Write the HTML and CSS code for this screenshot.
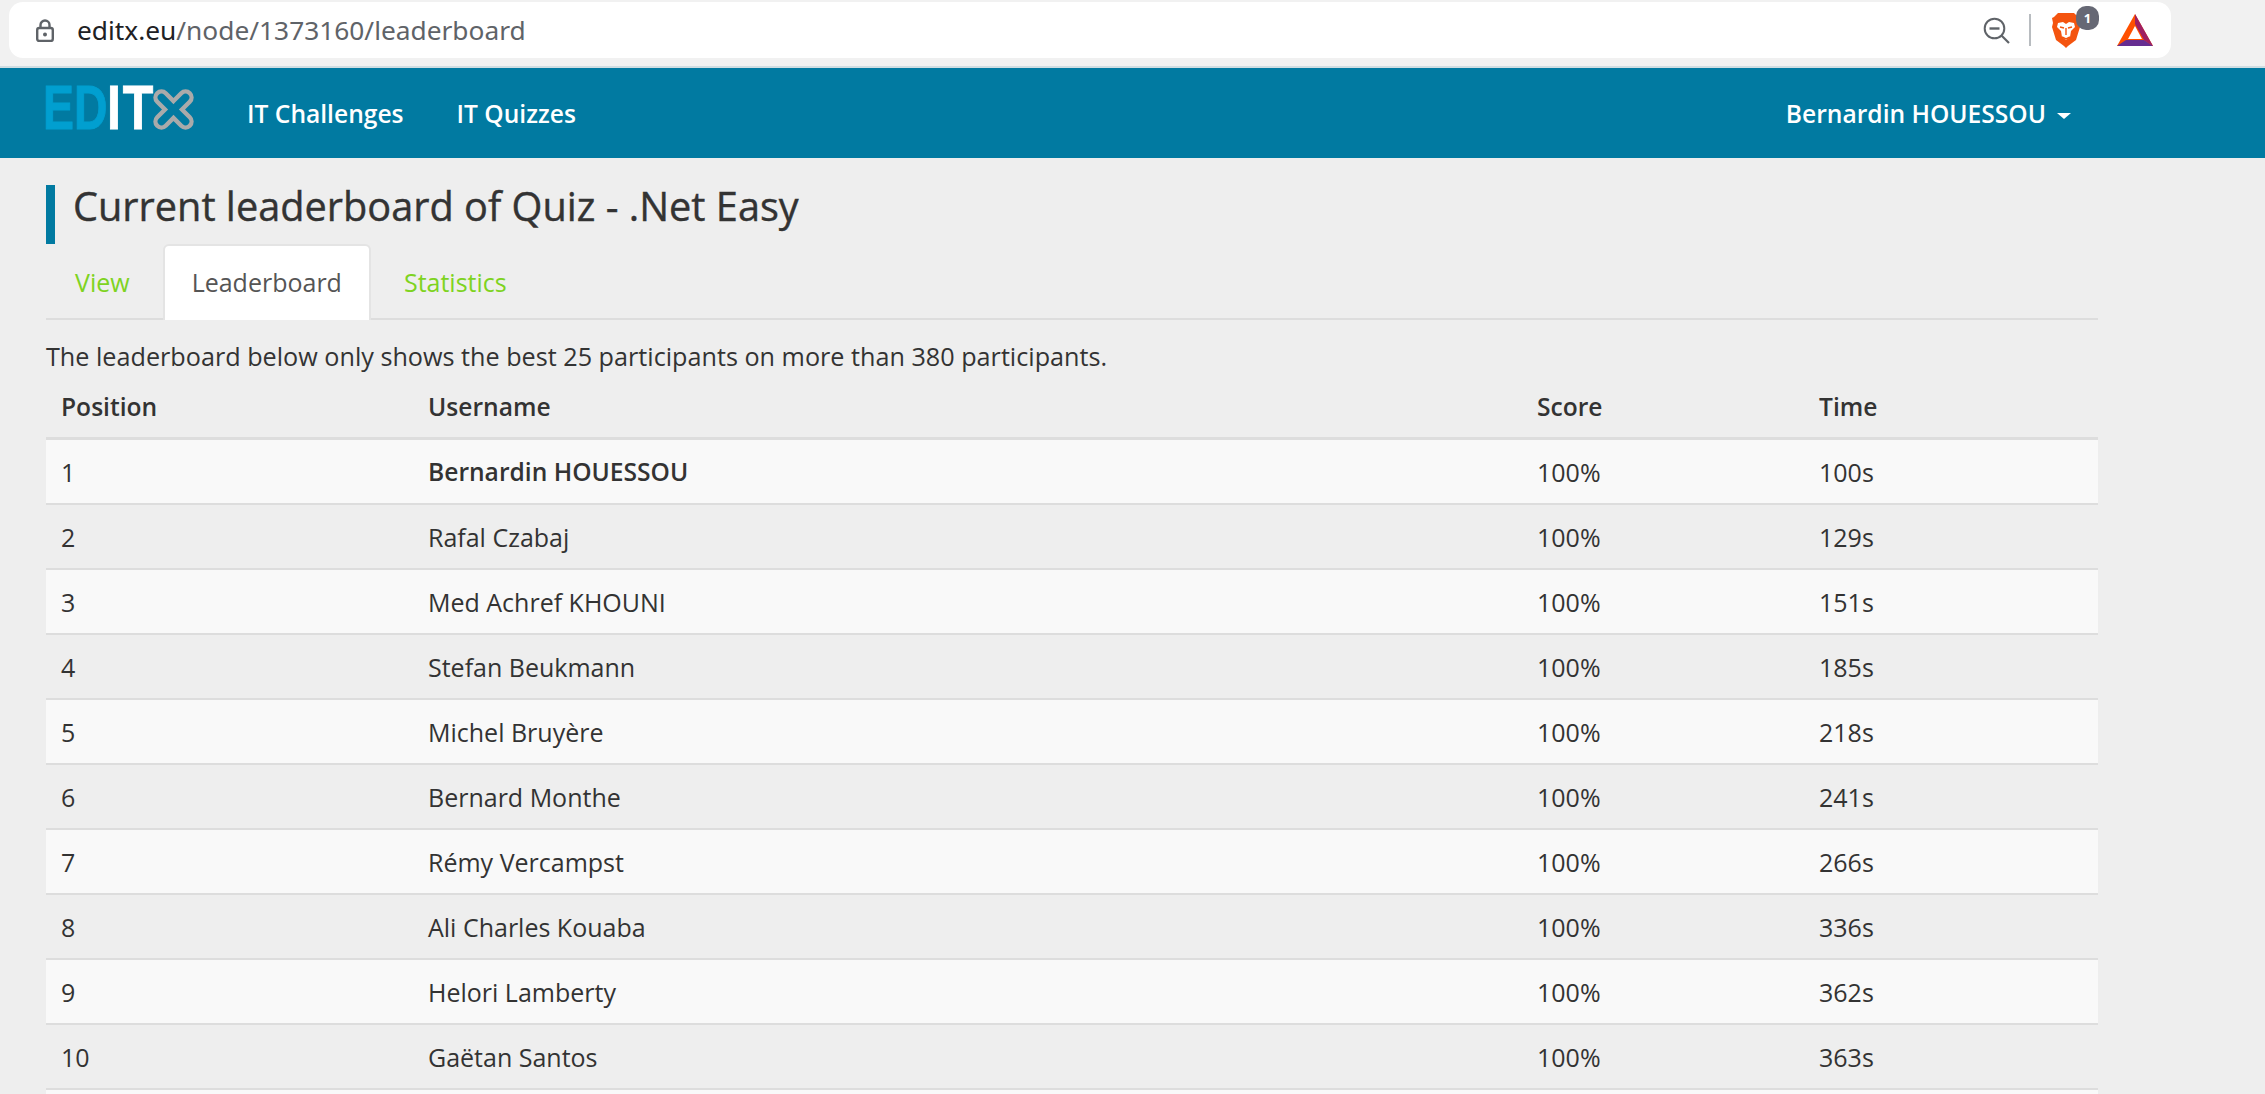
FILE: index.html
```html
<!DOCTYPE html>
<html>
<head>
	<meta charset="UTF-8">
	<title>Current leaderboard of Quiz - .Net Easy</title>
	<link rel="stylesheet" href="styles.css">
</head>

<body>
<div class="browser-bar">
	<div class="address">
		<svg class="lock" width="18" height="23" viewBox="0 0 18 23">
			<path d="M4.500 9V6a4.500 4.500 0 0 1 9 0v3" fill="none" stroke="#5f6368" stroke-width="2.400"/>
			<rect x="1.200" y="9" width="15.600" height="13" rx="2" fill="none" stroke="#5f6368" stroke-width="2.400"/>
			<circle cx="9" cy="15.500" r="2" fill="#5f6368"/>
		</svg>
		<span class="url"><span class="host">editx.eu</span>/node/1373160/leaderboard</span>
		<div class="address-icons">
			<svg class="zoom-out" width="27" height="27" viewBox="0 0 27 27">
				<circle cx="11.500" cy="11.500" r="9.800" fill="none" stroke="#5f6368" stroke-width="2"/>
				<path d="M6.500 11.500h10" stroke="#5f6368" stroke-width="2.400"/>
				<path d="M18.500 18.500l7.500 7.500" stroke="#5f6368" stroke-width="2.200"/>
			</svg>
			<div class="separator"></div>
			<div class="brave">
				<svg width="30" height="36" viewBox="0 0 30 36">
					<path d="M7 1h16l4 4 2 1-1 5 1 4-4 13-8 6-2 2-2-2-8-6L1 15l1-4-1-5 2-1z" fill="#f4540f"/>
					<path d="M7 11l5-1 3 2 3-2 5 1 1 4-4 4-1 6-4 3-4-3-1-6-4-4z" fill="#fff"/>
					<path d="M9 15l4 1M21 15l-4 1M15 16v7M11 25l4 2 4-2" fill="none" stroke="#f4540f" stroke-width="1.400"/>
				</svg>
				<span class="badge">1</span>
			</div>
			<svg class="bat" width="36" height="32" viewBox="0 0 36 32">
				<path d="M18 0L0 32h36z" fill="#ff5000"/>
				<path d="M18 0l18 32-9-6-9-16z" fill="#9e1f63"/>
				<path d="M0 32l9-6h18l9 6z" fill="#662d91"/>
				<path d="M18 12l7 13h-14z" fill="#fff"/>
			</svg>
		</div>
	</div>
</div>

<nav class="navbar">
	<svg class="logo" width="156" height="90" viewBox="-6 0 156 90">
		<text class="logo-ed" transform="translate(-3 61) scale(1.160 1.580)">ED</text>
		<text class="logo-it" transform="translate(61 61) scale(1.250 1.580)">IT</text>
		<path transform="translate(127.500 41.500) rotate(45)" d="M-6-6V-17a6 6 0 0 1 12 0V-6H17a6 6 0 0 1 0 12H6V17a6 6 0 0 1-12 0V6H-17a6 6 0 0 1 0-12z" fill="none" stroke="#aaaaaa" stroke-width="4.400"/>
	</svg>
	<a class="nav-link first">IT Challenges</a>
	<a class="nav-link">IT Quizzes</a>
	<a class="nav-link user">Bernardin HOUESSOU<span class="caret"></span></a>
</nav>

<div class="content">
	<h1 class="page-title">Current leaderboard of Quiz - .Net Easy</h1>
	<ul class="tabs">
		<li class="tab">View</li>
		<li class="tab active">Leaderboard</li>
		<li class="tab">Statistics</li>
	</ul>
	<p class="intro">The leaderboard below only shows the best 25 participants on more than 380 participants.</p>
	<table class="board">
		<colgroup>
			<col class="col-pos">
			<col class="col-name">
			<col class="col-score">
			<col class="col-time">
		</colgroup>
		<thead>
			<tr><th>Position</th><th>Username</th><th>Score</th><th>Time</th></tr>
		</thead>
		<tbody>
			<tr><td>1</td><td class="me">Bernardin HOUESSOU</td><td>100%</td><td>100s</td></tr>
			<tr><td>2</td><td>Rafal Czabaj</td><td>100%</td><td>129s</td></tr>
			<tr><td>3</td><td>Med Achref KHOUNI</td><td>100%</td><td>151s</td></tr>
			<tr><td>4</td><td>Stefan Beukmann</td><td>100%</td><td>185s</td></tr>
			<tr><td>5</td><td>Michel Bruyère</td><td>100%</td><td>218s</td></tr>
			<tr><td>6</td><td>Bernard Monthe</td><td>100%</td><td>241s</td></tr>
			<tr><td>7</td><td>Rémy Vercampst</td><td>100%</td><td>266s</td></tr>
			<tr><td>8</td><td>Ali Charles Kouaba</td><td>100%</td><td>336s</td></tr>
			<tr><td>9</td><td>Helori Lamberty</td><td>100%</td><td>362s</td></tr>
			<tr><td>10</td><td>Gaëtan Santos</td><td>100%</td><td>363s</td></tr>
			<tr class="last-row"><td></td><td></td><td></td><td></td></tr>
		</tbody>
	</table>
</div>
</body>
</html>
```

FILE: styles.css
```css
html, body {
	height: 100%;
	overflow: hidden;
}
body {
	margin: 0;
	background-color: #eeeeee;
	color: #333333;
	font-family: "Open Sans", "Noto Sans", sans-serif;
	font-size: 25px;
}

/* browser chrome */
.browser-bar {
	height: 66px;
	box-sizing: border-box;
	padding: 2px 94px 0 9px;
	background-color: #f1f1f1;
}
.address {
	display: flex;
	align-items: center;
	height: 56px;
	padding: 0 18px 0 27px;
	background-color: #fff;
	border-radius: 14px;
}
.url {
	margin-left: 23px;
	font-family: "Noto Sans", "Open Sans", sans-serif;
	font-size: 26.300px;
	color: #5f6368;
}
.host {
	color: #202124;
}
.address-icons {
	display: flex;
	align-items: center;
	margin-left: auto;
}
.separator {
	width: 2px;
	height: 32px;
	margin: 0 20px 0 19px;
	background-color: #b8bcc0;
}
.brave {
	position: relative;
	width: 30px;
	height: 36px;
	margin-right: 36px;
}
.badge {
	position: absolute;
	top: -6px;
	left: 25px;
	width: 23px;
	height: 24px;
	border-radius: 10px;
	background-color: #666874;
	color: #fff;
	font-size: 13px;
	font-weight: 700;
	line-height: 24px;
	text-align: center;
}

/* navbar */
.navbar {
	display: flex;
	align-items: center;
	height: 90px;
	padding-left: 40px;
	background-color: #017aa1;
	border-top: 2px solid #cfdde2;
}
.logo-ed, .logo-it {
	font-family: "Liberation Sans", sans-serif;
	font-size: 40px;
	font-weight: 700;
	stroke-width: 0.600px;
}
.logo-ed {
	fill: #019fd0;
	stroke: #019fd0;
}
.logo-it {
	fill: #fff;
	stroke: #fff;
	letter-spacing: 1.500px;
}
.nav-link {
	margin-left: 53px;
	color: #fff;
	font-size: 24.600px;
	font-weight: 600;
}
.nav-link.first {
	margin-left: 51px;
}
.nav-link.user {
	margin-left: auto;
	margin-right: 194px;
}
.caret {
	display: inline-block;
	margin-left: 11px;
	vertical-align: middle;
	border-top: 6px solid #fff;
	border-left: 7px solid transparent;
	border-right: 7px solid transparent;
}

/* page */
.content {
	width: 2052px;
	margin-left: 46px;
}
.page-title {
	margin: 27px 0 0;
	padding-left: 18px;
	height: 59px;
	border-left: 9px solid #017aa1;
	font-size: 39.700px;
	font-weight: 500;
	line-height: 42px;
	-webkit-text-stroke: 0.4px #333333;
}
.tabs {
	display: flex;
	height: 76px;
	box-sizing: border-box;
	margin: 0;
	padding: 0;
	list-style: none;
	border-bottom: 2px solid #dddddd;
}
.tab {
	height: 76px;
	box-sizing: border-box;
	margin-right: 4px;
	padding: 21px 29px 0;
	color: #7ed321;
	font-size: 25px;
}
.tab.active {
	padding: 19px 27px 0;
	border: 2px solid #e4e4e4;
	border-bottom: none;
	border-radius: 6px 6px 0 0;
	background-color: #fff;
	color: #555555;
}
.intro {
	margin: 19px 0 0;
	font-size: 25.200px;
	line-height: 34px;
}
.board {
	width: 100%;
	margin-top: 4px;
	table-layout: fixed;
	border-collapse: collapse;
}
.col-pos { width: 367px; }
.col-name { width: 1109px; }
.col-score { width: 282px; }
.col-time { width: 294px; }
.board th {
	height: 58px;
	padding: 0 15px 2px;
	text-align: left;
	font-size: 24.600px;
	font-weight: 600;
	border-bottom: 3px solid #dddddd;
}
.board td {
	height: 63px;
	padding: 0 15px;
	border-bottom: 2px solid #dddddd;
}
.board tbody tr:nth-child(odd) {
	background-color: #f9f9f9;
}
.board .me {
	font-size: 24.600px;
	font-weight: 600;
}
```
